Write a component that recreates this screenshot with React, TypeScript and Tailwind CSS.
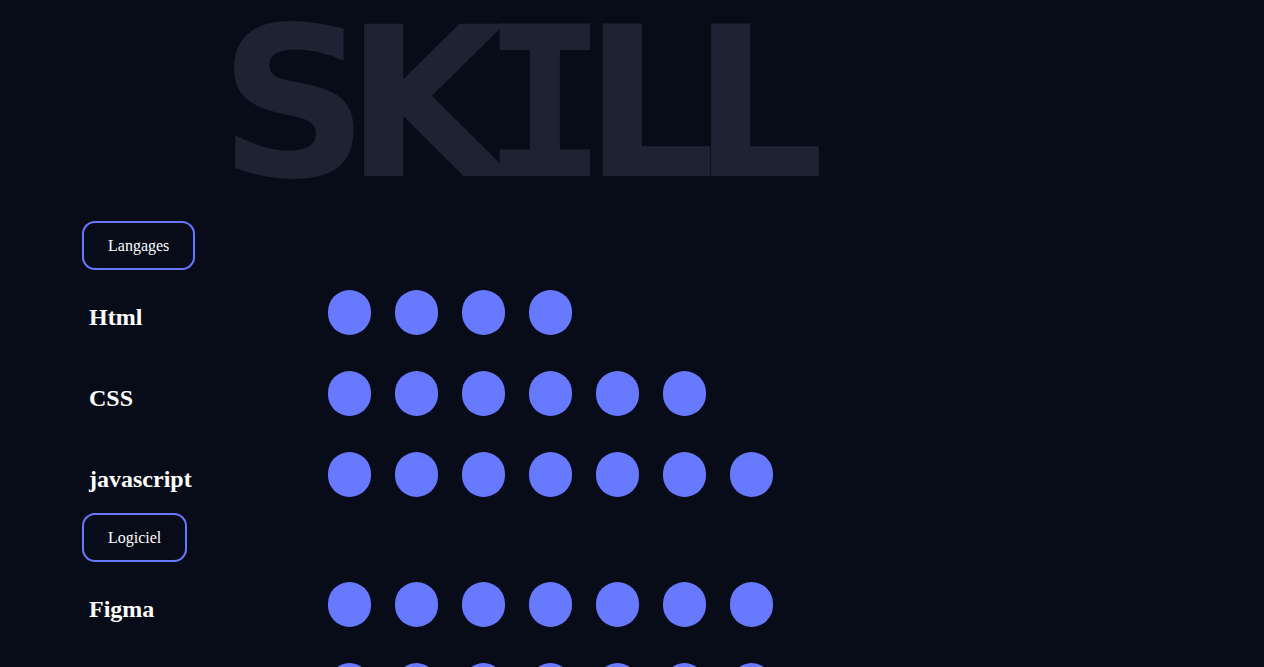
const languages = [
  { name: "Html", level: 4 },
  { name: "CSS", level: 6 },
  { name: "javascript", level: 7 },
];

const software = [
  { name: "Figma", level: 7 },
  { name: "Photoshop", level: 7 },
];

const CategoryButton = ({ label }: { label: string }) => {
  return (
    <button className="inline-flex h-[49px] items-center rounded-[13px] border-2 border-[#6678ff] px-[24px] text-[16px] leading-[normal] text-white">
      {label}
    </button>
  );
};

const SkillRow = ({ name, level }: { name: string; level: number }) => {
  return (
    <div className="flex pt-[20px] pb-[16px]">
      <h2 className="mt-[14px] w-[246px] pl-[7px] text-[24px] font-bold leading-[normal] text-white">
        {name}
      </h2>
      <div className="flex gap-[24px]">
        {Array.from({ length: level }).map((_, i) => (
          <span key={i} className="h-[45px] w-[43px] rounded-full bg-[#6779ff]" />
        ))}
      </div>
    </div>
  );
};

const App = () => {
  return (
    <div className="min-h-screen overflow-hidden bg-[#080c19] font-['Liberation_Serif','Times_New_Roman',serif]">
      {/* Big title */}
      <h1 className="whitespace-nowrap pl-[219px] font-['DejaVu_Sans',sans-serif] text-[208px] font-bold leading-none tracking-[-0.115em] text-[#1f2233]">
        SK<span className="font-['DejaVu_Sans_Mono',monospace]">I</span>LL
      </h1>

      {/* Skills list */}
      <div className="pl-[82px] pt-[13px]">
        <CategoryButton label="Langages" />
        {languages.map((skill) => (
          <SkillRow key={skill.name} name={skill.name} level={skill.level} />
        ))}
        <CategoryButton label="Logiciel" />
        {software.map((skill) => (
          <SkillRow key={skill.name} name={skill.name} level={skill.level} />
        ))}
      </div>
    </div>
  );
};

export default App;
